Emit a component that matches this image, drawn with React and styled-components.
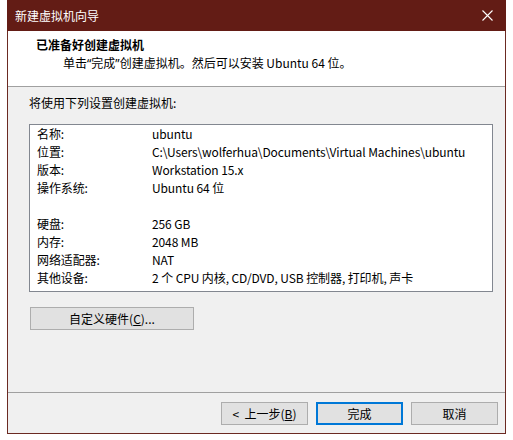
import React from "react";
import styled, { createGlobalStyle } from "styled-components";

const Global = createGlobalStyle`
  html, body { margin: 0; padding: 0; background: #ffffff; }
  body { font-family: "Noto Sans CJK SC", "Noto Sans", sans-serif; font-size: 12px; color: #000; }
`;

const Window = styled.div`
  margin-left: 7px;
  width: 499px;
  height: 434px;
  box-sizing: border-box;
  border: 1px solid #6b2a22;
  border-top: none;
  display: flex;
  flex-direction: column;
  background: #f0f0f0;
`;

const TitleBar = styled.div`
  height: 31px;
  flex-shrink: 0;
  background: #631c15;
  color: #ffffff;
  display: flex;
  align-items: center;
  justify-content: space-between;
  padding: 0 10px 0 8px;
  margin: 0 -1px;
  font-size: 12px;
  box-sizing: border-box;
`;

const CloseBtn = styled.div`
  width: 30px;
  height: 30px;
  display: flex;
  align-items: center;
  justify-content: center;
  margin-right: -6px;
`;

const Header = styled.div`
  height: 56px;
  flex-shrink: 0;
  box-sizing: border-box;
  background: #ffffff;
  border-bottom: 1px solid #a0a0a0;
  display: flex;
  flex-direction: column;
  padding: 5px 0 0 28px;
`;

const HeaderTitle = styled.div`
  font-weight: bold;
  height: 18px;
  line-height: 18px;
`;

const HeaderSub = styled.div`
  padding-left: 27px;
  height: 18px;
  line-height: 18px;
`;

const Quote = styled.span`
  font-family: "Noto Sans", sans-serif;
`;

const Body = styled.div`
  flex: 1;
  padding: 7px 12px 0 21px;
  display: flex;
  flex-direction: column;
`;

const Prompt = styled.div`
  height: 18px;
  line-height: 18px;
  margin-bottom: 12px;
`;

const ListBox = styled.div`
  height: 168px;
  box-sizing: border-box;
  border: 1px solid #828790;
  background: #ffffff;
  padding: 0 0 0 7px;
`;

const Row = styled.div`
  display: grid;
  grid-template-columns: 115px 1fr;
  height: 18px;
  line-height: 18px;
  white-space: nowrap;
  letter-spacing: -0.1px;
`;

const Button = styled.button`
  font: inherit;
  font-size: 12px;
  color: #000;
  height: 23px;
  width: ${(p) => p.$w || 87}px;
  background: #e1e1e1;
  border: ${(p) => (p.$default ? "2px solid #0078d7" : "1px solid #adadad")};
  padding: 0;
  display: flex;
  align-items: center;
  justify-content: center;
  box-sizing: border-box;
  line-height: 1;
  white-space: pre;
`;

const CustomRow = styled.div`
  margin-top: 15px;
  padding-left: 1px;
`;

const Footer = styled.div`
  flex-shrink: 0;
  border-top: 1px solid #a0a0a0;
  height: 41px;
  box-sizing: border-box;
  display: flex;
  justify-content: flex-end;
  gap: 8px;
  padding: 9px 7px 0 0;
`;

const U = styled.span`
  text-decoration: underline;
`;

const rows = [
  ["名称:", "ubuntu"],
  ["位置:", "C:\\Users\\wolferhua\\Documents\\Virtual Machines\\ubuntu"],
  ["版本:", "Workstation 15.x"],
  ["操作系统:", "Ubuntu 64 位"],
  ["", ""],
  ["硬盘:", "256 GB"],
  ["内存:", "2048 MB"],
  ["网络适配器:", "NAT"],
  ["其他设备:", "2 个 CPU 内核, CD/DVD, USB 控制器, 打印机, 声卡"],
];

export default function App() {
  return (
    <>
      <Global />
      <Window>
        <TitleBar>
          <span>新建虚拟机向导</span>
          <CloseBtn>
            <svg width="11" height="11" viewBox="0 0 11 11">
              <path d="M0.5 0.5 L10.5 10.5 M10.5 0.5 L0.5 10.5" stroke="#fff" strokeWidth="1.1" />
            </svg>
          </CloseBtn>
        </TitleBar>
        <Header>
          <HeaderTitle>已准备好创建虚拟机</HeaderTitle>
          <HeaderSub>
            单击<Quote>&ldquo;</Quote>完成<Quote>&rdquo;</Quote>创建虚拟机。然后可以安装 Ubuntu 64 位。
          </HeaderSub>
        </Header>
        <Body>
          <Prompt>将使用下列设置创建虚拟机:</Prompt>
          <ListBox>
            {rows.map(([k, v], i) => (
              <Row key={i}>
                <span>{k}</span>
                <span>{v}</span>
              </Row>
            ))}
          </ListBox>
          <CustomRow>
            <Button $w={164}>
              自定义硬件(<U>C</U>)...
            </Button>
          </CustomRow>
        </Body>
        <Footer>
          <Button>
            {"<  上一步("}<U>B</U>)
          </Button>
          <Button $default>完成</Button>
          <Button>取消</Button>
        </Footer>
      </Window>
    </>
  );
}
